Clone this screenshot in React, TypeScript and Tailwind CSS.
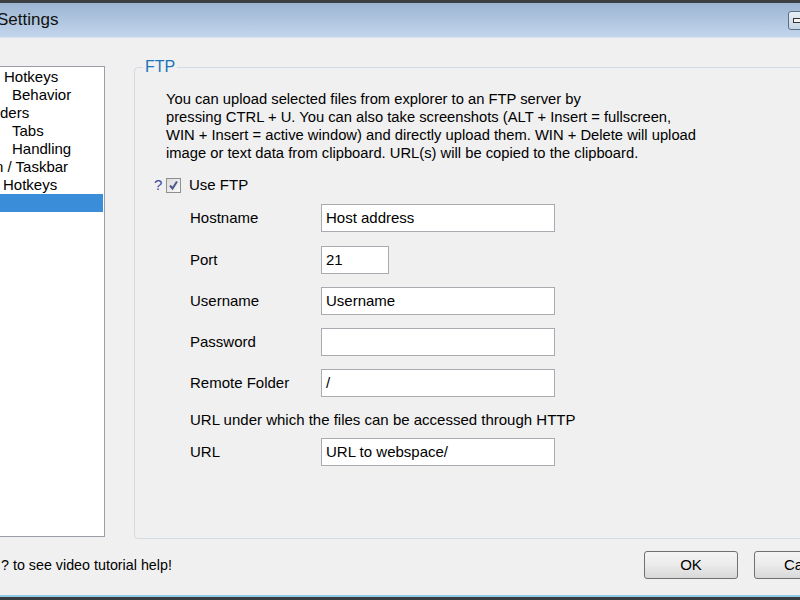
import React from "react";

function Input({ value, w }: { value: string; w: string }) {
  return (
    <div
      className={`${w} h-[28px] bg-white border border-[#a9abb0] flex items-center pl-[4px] text-[15px] leading-[18px] text-black whitespace-nowrap overflow-hidden`}
    >
      {value}
    </div>
  );
}

function Row({ label, value, w, mt }: { label: string; value: string; w: string; mt: string }) {
  return (
    <div className={`flex items-center ${mt}`}>
      <div className="w-[131px] shrink-0 text-[15px] leading-[18px]">{label}</div>
      <Input value={value} w={w} />
    </div>
  );
}

export default function App() {
  const items: { text: string; pl: string; sel?: boolean }[] = [
    { text: "Hotkeys", pl: "pl-[12px]" },
    { text: "Behavior", pl: "pl-[20px]" },
    { text: "ders", pl: "pl-[8px]" },
    { text: "Tabs", pl: "pl-[20px]" },
    { text: "Handling", pl: "pl-[20px]" },
    { text: "n / Taskbar", pl: "pl-[3px]" },
    { text: "Hotkeys", pl: "pl-[11px]" },
    { text: "", pl: "pl-[10px]", sel: true },
  ];
  return (
    <div className="w-[800px] h-[600px] overflow-hidden bg-[#f0f0f0] flex flex-col font-['Liberation_Sans',Arial,sans-serif] text-[15px] leading-[18px] text-black">
      {/* Title bar */}
      <div className="h-[38px] shrink-0 border-t-[3px] border-t-[#3d3f42] bg-gradient-to-b from-[#9cb5d2] to-[#c2d6ec] border-b border-b-[#d9e4ef] flex items-center justify-between">
        <span className="ml-[-3px] text-[17px] leading-[20px] text-[#111]">Settings</span>
        <div className="w-[26px] h-[19px] mr-[-14px] mt-[1px] rounded-[3px] border border-[#5b6c84] bg-gradient-to-b from-[#e7eef6] to-[#c6d4e4] flex items-center pl-[4px]">
          <div className="w-[8px] h-[5px] border border-[#333] bg-[#f4f4f4]" />
        </div>
      </div>

      {/* Main */}
      <div className="flex items-start h-[501px] shrink-0">
        {/* List */}
        <div className="mt-[28px] ml-[-10px] w-[115px] h-[471px] shrink-0 bg-white border border-[#9a9ea6] overflow-hidden pt-[1px] px-[1px]">
          {items.map((it, i) => (
            <div
              key={i}
              className={`h-[18px] leading-[18px] whitespace-nowrap ${it.pl} ${it.sel ? "bg-[#3a8dd8] text-white" : ""}`}
            >
              {it.text}
            </div>
          ))}
        </div>

        {/* Group box */}
        <fieldset className="mt-[20px] ml-[29px] mr-[-30px] flex-1 h-[481px] border border-[#d3dbe2] rounded-[4px] pl-[31px] pr-[10px]">
          <legend className="ml-[-23px] px-[2px] text-[#1b74b9] text-[16px] leading-[18px]">FTP</legend>
          <div className="mt-[14px] whitespace-nowrap leading-[18px] text-[14.75px]">
            You can upload selected files from explorer to an FTP server by
            <br />
            pressing CTRL + U. You can also take screenshots (ALT + Insert = fullscreen,
            <br />
            WIN + Insert = active window) and directly upload them. WIN + Delete will upload
            <br />
            image or text data from clipboard. URL(s) will be copied to the clipboard.
          </div>

          <div className="flex items-center mt-[14px] ml-[-12px] h-[18px]">
            <span className="w-[12px] text-[#3b4aa0]">?</span>
            <div className="w-[15px] h-[15px] border border-[#8e8f8f] bg-gradient-to-br from-[#dcdcdc] to-[#fafafa] flex items-center justify-center">
              <svg width="11" height="11" viewBox="0 0 11 11">
                <path d="M2 5.5 L4.5 8.5 L9 1.5" fill="none" stroke="#4b5a88" strokeWidth="2" />
              </svg>
            </div>
            <span className="ml-[8px]">Use FTP</span>
          </div>

          <div className="ml-[24px]">
            <Row label="Hostname" value="Host address" w="w-[234px]" mt="mt-[10px]" />
            <Row label="Port" value="21" w="w-[68px]" mt="mt-[14px]" />
            <Row label="Username" value="Username" w="w-[234px]" mt="mt-[13px]" />
            <Row label="Password" value="" w="w-[234px]" mt="mt-[13px]" />
            <Row label="Remote Folder" value="/" w="w-[234px]" mt="mt-[13px]" />
            <div className="mt-[14px] h-[18px] whitespace-nowrap">
              URL under which the files can be accessed through HTTP
            </div>
            <Row label="URL" value="URL to webspace/" w="w-[234px]" mt="mt-[9px]" />
          </div>
        </fieldset>
      </div>

      {/* Bottom */}
      <div className="flex items-start h-[56px] shrink-0">
        <span className="mt-[17px] ml-[1px] whitespace-nowrap text-[14.3px]">? to see video tutorial help!</span>
        <div className="ml-auto mr-[-48px] flex gap-[16px] mt-[12px]">
          <button className="w-[94px] h-[28px] rounded-[3px] border border-[#707070] bg-gradient-to-b from-[#f4f4f4] via-[#ebebeb] to-[#d8d8d8] text-[15px] leading-[18px]">
            OK
          </button>
          <button className="w-[94px] h-[28px] rounded-[3px] border border-[#707070] bg-gradient-to-b from-[#f4f4f4] via-[#ebebeb] to-[#d8d8d8] text-[15px] leading-[18px] text-left pl-[29px]">
            Cancel
          </button>
        </div>
      </div>
      <div className="h-[5px] shrink-0 border-t-[2px] border-t-[#8fcbe6] bg-[#3a3d40]" />
    </div>
  );
}
